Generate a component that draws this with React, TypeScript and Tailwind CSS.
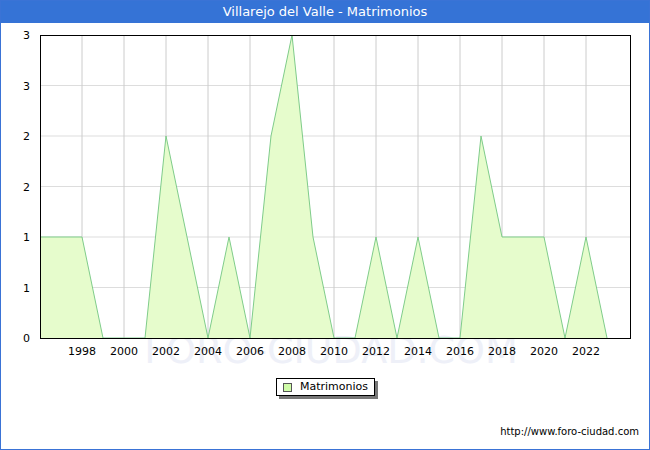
const data = [1,1,1,0,0,0,2,1,0,1,0,2,3,1,0,0,1,0,1,0,0,2,1,1,1,0,1,0];
const px = (i: number) => 39 + 21 * i;
const py = (v: number) => 315 - v * 101;

export default function App() {
  const line = data.map((v, i) => `${px(i)},${py(v)}`).join(" ");
  const area = `${px(0)},315 ${line} ${px(data.length - 1)},315`;
  const years = [1998,2000,2002,2004,2006,2008,2010,2012,2014,2016,2018,2020,2022];
  const yl = ["3","3","2","2","1","1","0"];
  return (
    <div className="w-[650px] h-[450px] border border-[#3a73d6] bg-white flex flex-col" style={{ fontFamily: '"DejaVu Sans", sans-serif' }}>
      <div className="h-[22px] bg-[#3573d6] text-white text-[13px] flex items-center justify-center">Villarejo del Valle - Matrimonios</div>
      <svg width="648" height="345" className="block">
        <text x="330" y="340" textAnchor="middle" fontSize="38" fill="#eef0f8" fontFamily="DejaVu Sans">FORO-CIUDAD.COM</text>
        {[0.5,1,1.5,2,2.5].map(v => <line key={v} x1="39" x2="629" y1={py(v)} y2={py(v)} stroke="#dddddd" />)}
        {years.map((y) => <line key={y} x1={px(y-1996)} x2={px(y-1996)} y1="12" y2="315" stroke="#cccccc" />)}
        <polygon points={area} fill="#e6fccc" />
        <polyline points={line} fill="none" stroke="#7fcc8a" strokeWidth="1" />
        <rect x="39.5" y="12.5" width="590" height="303" fill="none" stroke="#000" />
        {yl.map((t, i) => <text key={i} x="29" y={12 + i * 50.5 + 4} textAnchor="end" fontSize="11" fill="#000" fontFamily="DejaVu Sans">{t}</text>)}
        {years.map((y) => <text key={y} x={px(y-1996)} y="332" textAnchor="middle" fontSize="11" fill="#000" fontFamily="DejaVu Sans">{y}</text>)}
      </svg>
      <div className="flex justify-center mt-[10px] pl-[1px]">
        <div className="flex items-center gap-[8px] border border-black bg-white px-[6px] h-[18px] text-[11px] shadow-[3px_3px_0_#777]">
          <span className="w-[9px] h-[9px] border border-[#555] bg-[#cffca8]"></span>
          <span>Matrimonios</span>
        </div>
      </div>
      <div className="mt-auto mb-[10px] pr-[10px] text-right text-[10px]">http://www.foro-ciudad.com</div>
    </div>
  );
}
